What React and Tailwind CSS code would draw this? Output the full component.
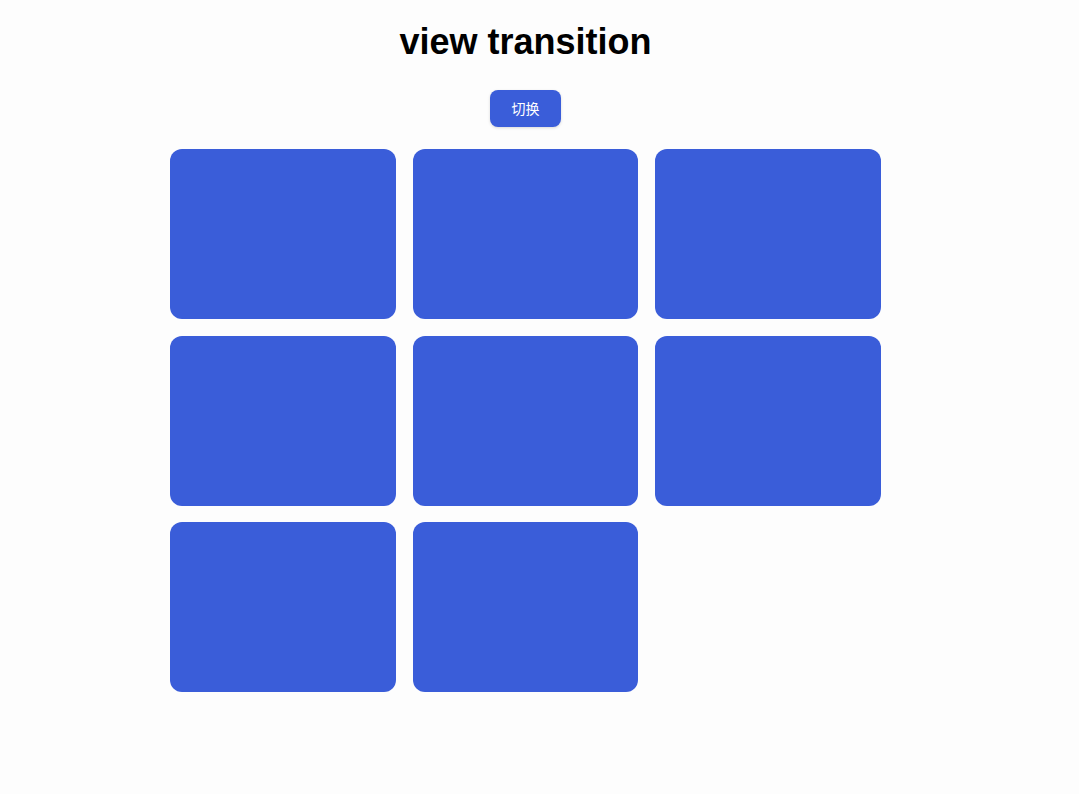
import React, { useState } from "react";

const cards = [1, 2, 3, 4, 5, 6, 7, 8];

function App() {
  const [toggled, setToggled] = useState(false);

  return (
    <div className="min-h-[794px] w-full bg-[#fdfdfd] font-['Liberation_Sans','Noto_Sans_CJK_SC',sans-serif]">
      <div className="w-[1051px] flex flex-col items-center">
        <h1 className="mt-[22px] text-[36px] leading-[40px] font-bold text-black">
          view transition
        </h1>
        <button
          onClick={() => setToggled(!toggled)}
          className="mt-[28px] w-[71px] h-[37px] rounded-[8px] bg-[#3a5dd9] text-white text-[14px] shadow-[0_1px_3px_rgba(0,0,0,0.15)] font-['Noto_Sans_CJK_SC',sans-serif]"
        >
          切换
        </button>
        <div className="mt-[22px] w-[711px] grid grid-cols-3 gap-x-[17px] gap-y-[16.5px]">
          {cards.map((card) => (
            <div key={card} className="h-[170px] rounded-[12px] bg-[#3a5dd9]" />
          ))}
        </div>
      </div>
    </div>
  );
}

export default App;
